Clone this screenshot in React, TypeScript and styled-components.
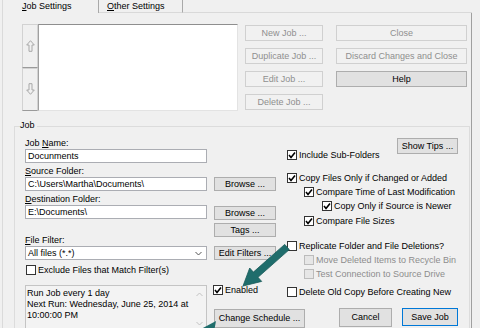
import styled, { createGlobalStyle } from 'styled-components'

const GlobalStyle = createGlobalStyle`
    html, body {
        margin: 0;
        padding: 0;
        background: #f0f0f0;
    }
    body {
        font-family: "Liberation Sans", Arial, sans-serif;
        font-size: 9px;
        color: #000;
    }
`

const Window = styled.div`
    position: relative;
    width: 480px;
    height: 328px;
    overflow: hidden;
    background: #f0f0f0;
    display: flex;
    flex-direction: column;
`

const TabStrip = styled.div`
    display: flex;
    height: 14px;
    margin: 0 8px 0 2px;
`

const Tab = styled.div<{ $active?: boolean; $width: number; $pad: number }>`
    box-sizing: border-box;
    width: ${(p) => p.$width}px;
    padding-left: ${(p) => p.$pad}px;
    line-height: 12px;
    white-space: nowrap;
    border-right: 1px solid #a9a9a9;
    border-left: ${(p) => (p.$active ? '1px solid #dadada' : 'none')};
    border-bottom: ${(p) => (p.$active ? 'none' : '1px solid #d9d9d9')};
`

const TabFill = styled.div`
    flex: 1;
    border-bottom: 1px solid #d9d9d9;
`

const Panel = styled.div`
    box-sizing: border-box;
    flex: 1;
    width: 470px;
    margin-left: 2px;
    padding-top: 11px;
    border-left: 1px solid #dadada;
    border-right: 1px solid #a0a0a0;
    display: flex;
    flex-direction: column;
`

const TopSection = styled.div`
    display: flex;
    height: 87px;
    margin-left: 19px;
`

const ArrowCol = styled.div`
    width: 16px;
    display: flex;
    flex-direction: column;
`

const ArrowBtn = styled.div`
    box-sizing: border-box;
    flex: 1;
    display: flex;
    align-items: center;
    justify-content: center;
    background: #f0f0f0;
    border: 1px solid #d2d2d2;
    border-bottom-color: #9a9a9a;
`

const ListBox = styled.div`
    box-sizing: border-box;
    width: 200px;
    background: #fff;
    border: 1px solid #e3e3e3;
    border-top-color: #8e8e8e;
    border-left-color: #a0a0a0;
`

const JobButtons = styled.div`
    display: grid;
    grid-template-columns: 78px 131px;
    grid-auto-rows: 16px;
    column-gap: 13px;
    row-gap: 7px;
    margin-left: 7px;
    padding-top: 1px;
`

const Btn = styled.button<{ $w?: number; $h?: number; $gap?: number; $default?: boolean }>`
    box-sizing: border-box;
    width: ${(p) => (p.$w ? `${p.$w}px` : '100%')};
    height: ${(p) => p.$h ?? 14}px;
    margin: ${(p) => p.$gap ?? 0}px 0 0 0;
    padding: 0;
    font: inherit;
    line-height: 1;
    white-space: nowrap;
    color: #000;
    background: #e1e1e1;
    border: 1px solid ${(p) => (p.$default ? '#0078d7' : '#adadad')};
    &:disabled {
        color: #8f8f8f;
        background: #f1f1f1;
        border-color: #d0d0d0;
    }
`

const GroupBox = styled.div`
    flex: 1;
    margin: 15px 1px 0 11px;
    padding: 0 11px 0 10px;
    border: 1px solid #dcdcdc;
    border-bottom: none;
    display: flex;
    flex-direction: column;
`

const GroupLegend = styled.div`
    width: fit-content;
    margin: -8px 0 0 -5px;
    padding: 0 2px 0 0;
    line-height: 12px;
    background: #f0f0f0;
`

const Columns = styled.div`
    display: flex;
`

const Column = styled.div<{ $w?: number; $left?: number }>`
    display: flex;
    flex-direction: column;
    width: ${(p) => (p.$w ? `${p.$w}px` : 'auto')};
    flex: ${(p) => (p.$w ? 'none' : '1')};
    margin-left: ${(p) => p.$left ?? 0}px;
`

const FieldLabel = styled.div<{ $gap: number }>`
    height: 12px;
    line-height: 12px;
    margin-top: ${(p) => p.$gap}px;
    white-space: nowrap;
`

const TextBox = styled.div`
    box-sizing: border-box;
    height: 14px;
    padding: 0 4px 0 2px;
    line-height: 12px;
    background: #fff;
    border: 1px solid #abadb3;
    white-space: nowrap;
    display: flex;
    align-items: center;
    justify-content: space-between;
`

const CheckRow = styled.div<{ $gap: number; $indent?: number; $off?: boolean }>`
    display: flex;
    align-items: center;
    gap: 2px;
    height: 12px;
    margin-top: ${(p) => p.$gap}px;
    margin-left: ${(p) => p.$indent ?? 0}px;
    white-space: nowrap;
    color: ${(p) => (p.$off ? '#8d8d8d' : '#000')};
`

const Box = styled.span<{ $off?: boolean }>`
    box-sizing: border-box;
    width: 10px;
    height: 10px;
    flex: none;
    display: flex;
    align-items: center;
    justify-content: center;
    background: ${(p) => (p.$off ? '#e6e6e6' : '#fff')};
    border: 1px solid ${(p) => (p.$off ? '#bcbcbc' : '#333')};
`

const ScheduleBox = styled.div`
    box-sizing: border-box;
    height: 46px;
    margin-top: 9px;
    display: flex;
    background: #f3f3f3;
    border: 1px solid #c4c4c4;
`

const ScheduleText = styled.div`
    flex: 1;
    padding: 2px 0 0 1px;
    line-height: 11px;
`

const ScrollCol = styled.div`
    width: 14px;
    display: flex;
    flex-direction: column;
    justify-content: space-between;
    align-items: center;
    padding: 6px 0 4px;
`

const HeadRow = styled.div`
    display: flex;
    justify-content: space-between;
    height: 23px;
    margin-top: 7px;
`

const HeadCheck = styled(CheckRow)`
    align-self: flex-end;
`

const ActionRow = styled.div`
    display: flex;
    justify-content: flex-end;
    align-items: flex-start;
    gap: 10px;
    margin-top: 10px;
`

const Annotation = styled.svg`
    position: absolute;
    inset: 0;
    pointer-events: none;
`

function Check({ checked, off }: { checked?: boolean; off?: boolean }) {
    return (
        <Box $off={off}>
            {checked && (
                <svg width="8" height="8" viewBox="0 0 8 8">
                    <polyline points="1,4 3,6.4 7,1.4" fill="none" stroke="#000" strokeWidth="1.6" />
                </svg>
            )}
        </Box>
    )
}

function Option({
    label,
    gap,
    indent,
    checked,
    off,
}: {
    label: string
    gap: number
    indent?: number
    checked?: boolean
    off?: boolean
}) {
    return (
        <CheckRow $gap={gap} $indent={indent} $off={off}>
            <Check checked={checked} off={off} />
            <span>{label}</span>
        </CheckRow>
    )
}

function Chevron({ up, color }: { up?: boolean; color: string }) {
    return (
        <svg width="7" height="5" viewBox="0 0 7 5">
            <polyline
                points={up ? '0.5,4 3.5,1 6.5,4' : '0.5,1 3.5,4 6.5,1'}
                fill="none"
                stroke={color}
                strokeWidth="1"
            />
        </svg>
    )
}

function HollowArrow({ down }: { down?: boolean }) {
    return (
        <svg width="9" height="12" viewBox="0 0 9 12" style={down ? { transform: 'scaleY(-1)' } : undefined}>
            <path d="M4.5 0.7 L8.3 5 H6 V11.3 H3 V5 H0.7 Z" fill="none" stroke="#a8a8a8" strokeWidth="1" />
        </svg>
    )
}

export default function App() {
    return (
        <>
            <GlobalStyle />
            <Window>
                <TabStrip>
                    <Tab $active $width={97} $pad={19}>
                        <u>J</u>ob Settings
                    </Tab>
                    <Tab $width={84} $pad={8}>
                        <u>O</u>ther Settings
                    </Tab>
                    <TabFill />
                </TabStrip>
                <Panel>
                    <TopSection>
                        <ArrowCol>
                            <ArrowBtn>
                                <HollowArrow />
                            </ArrowBtn>
                            <ArrowBtn>
                                <HollowArrow down />
                            </ArrowBtn>
                        </ArrowCol>
                        <ListBox />
                        <JobButtons>
                            <Btn $h={16} disabled>New Job ...</Btn>
                            <Btn $h={16} disabled>Close</Btn>
                            <Btn $h={16} disabled>Duplicate Job ...</Btn>
                            <Btn $h={16} disabled>Discard Changes and Close</Btn>
                            <Btn $h={16} disabled>Edit Job ...</Btn>
                            <Btn $h={16}>Help</Btn>
                            <Btn $h={16} disabled>Delete Job ...</Btn>
                        </JobButtons>
                    </TopSection>
                    <GroupBox>
                        <GroupLegend>Job</GroupLegend>
                        <Columns>
                            <Column $w={182}>
                                <FieldLabel $gap={6}>
                                    Job <u>N</u>ame:
                                </FieldLabel>
                                <TextBox>Docunments</TextBox>
                                <FieldLabel $gap={2}>
                                    <u>S</u>ource Folder:
                                </FieldLabel>
                                <TextBox>C:\Users\Martha\Documents\</TextBox>
                                <FieldLabel $gap={2}>
                                    <u>D</u>estination Folder:
                                </FieldLabel>
                                <TextBox>E:\Documents\</TextBox>
                                <FieldLabel $gap={15}>
                                    <u>F</u>ile Filter:
                                </FieldLabel>
                                <TextBox>
                                    <span>All files (*.*)</span>
                                    <Chevron color="#555" />
                                </TextBox>
                                <Option gap={4} indent={1} label="Exclude Files that Match Filter(s)" />
                                <ScheduleBox>
                                    <ScheduleText>
                                        Run Job every 1 day
                                        <br />
                                        Next Run: Wednesday, June 25, 2014 at
                                        <br />
                                        10:00:00 PM
                                    </ScheduleText>
                                    <ScrollCol>
                                        <Chevron up color="#c2c2c2" />
                                        <Chevron color="#c2c2c2" />
                                    </ScrollCol>
                                </ScheduleBox>
                            </Column>
                            <Column $w={62} $left={7}>
                                <Btn $gap={46}>Browse ...</Btn>
                                <Btn $gap={15}>Browse ...</Btn>
                                <Btn $gap={3}>Tags ...</Btn>
                                <Btn $gap={9}>Edit Filters ...</Btn>
                                <Option gap={24} indent={-1} checked label="Enabled" />
                                <Btn $gap={13} $w={91} $h={19}>
                                    Change Schedule ...
                                </Btn>
                            </Column>
                            <Column $left={11}>
                                <HeadRow>
                                    <HeadCheck $gap={0}>
                                        <Check checked />
                                        <span>Include Sub-Folders</span>
                                    </HeadCheck>
                                    <Btn $w={61} $h={16}>
                                        Show Tips ...
                                    </Btn>
                                </HeadRow>
                                <Option gap={11} checked label="Copy Files Only if Changed or Added" />
                                <Option gap={2} indent={17} checked label="Compare Time of Last Modification" />
                                <Option gap={2} indent={35} checked label="Copy Only if Source is Newer" />
                                <Option gap={3} indent={17} checked label="Compare File Sizes" />
                                <Option gap={13} label="Replicate Folder and File Deletions?" />
                                <Option gap={2} indent={17} off label="Move Deleted Items to Recycle Bin" />
                                <Option gap={2} indent={17} off label="Test Connection to Source Drive" />
                                <Option gap={6} label="Delete Old Copy Before Creating New" />
                                <ActionRow>
                                    <Btn $w={53} $h={19}>
                                        Cancel
                                    </Btn>
                                    <Btn $w={56} $h={18} $default>
                                        Save Job
                                    </Btn>
                                </ActionRow>
                            </Column>
                        </Columns>
                    </GroupBox>
                </Panel>
                <Annotation width="480" height="328" viewBox="0 0 480 328">
                    <polygon
                        points="284.7,244.4 289.3,249.6 258,277.3 261.7,281.4 243,286 249.7,268 253.4,272.1"
                        fill="#1f6d6c"
                        stroke="#195a59"
                        strokeWidth="0.8"
                        strokeLinejoin="round"
                    />
                    <polygon points="216,321 201,329 214,332" fill="#1f6d6c" />
                </Annotation>
            </Window>
        </>
    )
}
